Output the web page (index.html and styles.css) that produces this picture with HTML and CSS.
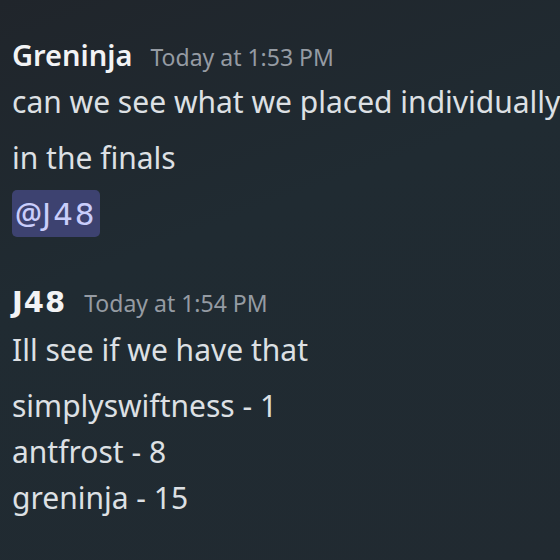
FILE: index.html
```html
<!DOCTYPE html>
<html>
<head>
<meta charset="utf-8">
<link rel="stylesheet" href="styles.css">
</head>
<body>
<div class="chat">
  <div class="group">
    <div class="header"><span class="name">Greninja</span><span class="time">Today at 1:53 PM</span></div>
    <div class="msg">can we see what we placed individually</div>
    <div class="msg">in the finals</div>
    <div class="msg"><span class="mention">@<span class="wide">J48</span></span></div>
  </div>
  <div class="group">
    <div class="header"><span class="name wide">J48</span><span class="time">Today at 1:54 PM</span></div>
    <div class="msg">Ill see if we have that</div>
    <div class="msg">simplyswiftness - 1<br>antfrost - 8<br>greninja - 15</div>
  </div>
</div>
</body>
</html>
```
FILE: styles.css
```css
html, body {
  margin: 0;
  padding: 0;
  width: 560px;
  height: 560px;
  overflow: hidden;
}
body {
  background: linear-gradient(160deg, #20252b 0%, #202b32 40%, #212a31 100%);
  font-family: "Noto Sans", "Open Sans", sans-serif;
  color: #dde0e4;
}
.chat {
  display: flex;
  flex-direction: column;
  gap: 44px;
  padding: 33px 0 0 12px;
}
.group {
  display: flex;
  flex-direction: column;
  gap: 10px;
}
.header {
  display: flex;
  align-items: baseline;
  gap: 18px;
  height: 36px;
  line-height: 43px;
  white-space: nowrap;
}
.name {
  font-size: 29px;
  font-weight: 600;
  color: #f2f3f5;
}
.time {
  font-size: 23px;
  color: #959ba3;
}
.msg {
  font-size: 30px;
  line-height: 46px;
  white-space: nowrap;
}
.wide {
  font-family: "DejaVu Sans", "Noto Sans", sans-serif;
  font-size: 28px;
}
.name.wide {
  font-weight: 700;
  font-size: 29px;
  letter-spacing: 1px;
}
.mention {
  background: #3d4270;
  color: #c9cdfb;
  font-weight: 500;
  border-radius: 5px;
  padding: 3px 5px 3px 3px;
}
.mention .wide {
  font-size: 31px;
  line-height: 1;
  letter-spacing: 2px;
  margin-right: -2px;
}
```
